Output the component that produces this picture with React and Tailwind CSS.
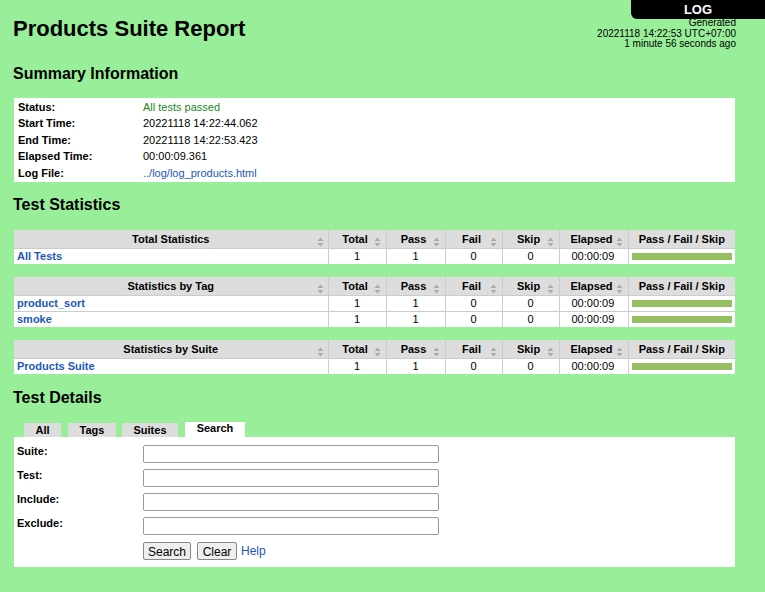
import React from 'react';

const font = { fontFamily: '"Liberation Sans", Arial, sans-serif' };

const SortIcon = () => (
  <svg width="7" height="10" viewBox="0 0 7 10" className="inline-block">
    <path d="M3.5 0.5 L6.5 4 L0.5 4 Z" fill="#aaa" />
    <path d="M3.5 9.5 L6.5 6 L0.5 6 Z" fill="#aaa" />
  </svg>
);

const cols = [
  { label: 'Total', w: 'w-[58px]' },
  { label: 'Pass', w: 'w-[59px]' },
  { label: 'Fail', w: 'w-[57px]' },
  { label: 'Skip', w: 'w-[57px]' },
  { label: 'Elapsed', w: 'w-[69px]' },
];

const StatTable = ({ title, rows }) => (
  <table className="w-[721px] table-fixed border-collapse bg-white text-[11px] leading-[13px]">
    <colgroup>
      <col className="w-[314px]" />
      {cols.map((c) => <col key={c.label} className={c.w} />)}
      <col className="w-[107px]" />
    </colgroup>
    <thead>
      <tr className="h-[18px] bg-[#ddd]">
        <th className="relative border-r border-[#ccc] px-1 text-center font-bold">
          {title}
          <span className="absolute right-[4px] top-[4px]"><SortIcon /></span>
        </th>
        {cols.map((c) => (
          <th key={c.label} className="relative border-r border-[#ccc] pr-[12px] text-right font-bold">
            <span className="inline-block w-full pl-[8px] text-center">{c.label}</span>
            <span className="absolute right-[5px] top-[4px]"><SortIcon /></span>
          </th>
        ))}
        <th className="text-center font-bold">Pass / Fail / Skip</th>
      </tr>
    </thead>
    <tbody>
      {rows.map((r) => (
        <tr key={r} className="h-[16px] border-t border-[#ccc]">
          <td className="border-r border-[#ccc] px-[3px] font-bold text-[#2157b8]">{r}</td>
          <td className="border-r border-[#ccc] text-center">1</td>
          <td className="border-r border-[#ccc] text-center">1</td>
          <td className="border-r border-[#ccc] text-center">0</td>
          <td className="border-r border-[#ccc] text-center">0</td>
          <td className="border-r border-[#ccc] pl-[12px]">00:00:09</td>
          <td className="px-[3px]">
            <div className="h-[7px] w-[100px] bg-[#97bd61]" />
          </td>
        </tr>
      ))}
    </tbody>
  </table>
);

const summary = [
  ['Status:', 'All tests passed', 'text-[#1a881a]'],
  ['Start Time:', '20221118 14:22:44.062', 'text-black'],
  ['End Time:', '20221118 14:22:53.423', 'text-black'],
  ['Elapsed Time:', '00:00:09.361', 'text-black'],
  ['Log File:', '../log/log_products.html', 'text-[#2157b8]'],
];

const fields = ['Suite:', 'Test:', 'Include:', 'Exclude:'];

export default function App() {
  return (
    <div className="relative min-h-[592px] w-[765px] overflow-hidden bg-[#9e9] text-black" style={font}>
      {/* log link badge */}
      <div className="absolute right-0 top-0 z-10 flex h-[19px] w-[134px] items-center justify-center rounded-bl-[6px] bg-black text-[13px] font-bold text-white">
        LOG
      </div>

      {/* header */}
      <div className="flex items-start justify-between pl-[13px] pr-[29px]">
        <h1 className="pt-[16px] text-[22px] font-bold leading-[26px]">Products Suite Report</h1>
        <div className="pt-[18px] text-right text-[10px] leading-[10.5px]">
          <div>Generated</div>
          <div>20221118 14:22:53 UTC+07:00</div>
          <div>1 minute 56 seconds ago</div>
        </div>
      </div>

      {/* summary */}
      <h2 className="mt-[14px] pl-[13px] text-[16px] font-bold leading-[20px]">Summary Information</h2>
      <div className="ml-[14px] mt-[14px] w-[721px] bg-white px-[4px] py-[1px] text-[11px]">
        {summary.map(([k, v, c]) => (
          <div key={k} className="flex h-[16.6px] items-center">
            <div className="w-[125px] font-bold">{k}</div>
            <div className={c}>{v}</div>
          </div>
        ))}
      </div>

      {/* statistics */}
      <h2 className="mt-[13px] pl-[13px] text-[16px] font-bold leading-[20px]">Test Statistics</h2>
      <div className="ml-[14px] mt-[15px] flex flex-col gap-[13px]">
        <StatTable title="Total Statistics" rows={['All Tests']} />
        <StatTable title="Statistics by Tag" rows={['product_sort', 'smoke']} />
        <StatTable title="Statistics by Suite" rows={['Products Suite']} />
      </div>

      {/* details */}
      <h2 className="mt-[14px] pl-[13px] text-[16px] font-bold leading-[20px]">Test Details</h2>
      <div className="ml-[24px] mt-[14px] flex items-end text-[11px] font-bold">
        <div className="flex h-[14px] w-[37px] items-center justify-center bg-[#ddd]">All</div>
        <div className="ml-[7px] flex h-[14px] w-[48px] items-center justify-center bg-[#ddd]">Tags</div>
        <div className="ml-[6px] flex h-[14px] w-[56px] items-center justify-center bg-[#ddd]">Suites</div>
        <div className="ml-[7px] flex h-[15px] w-[60px] items-end justify-center bg-white pb-[1px]">Search</div>
      </div>
      <div className="ml-[14px] w-[721px] bg-white pb-[7px] pl-[3px] pt-[8px] text-[11px]">
        {fields.map((f) => (
          <div key={f} className="mb-[6px] flex h-[18px]">
            <div className="w-[126px] font-bold leading-[12px]">{f}</div>
            <input className="h-[18px] w-[296px] rounded-[2px] border border-[#999] bg-white" />
          </div>
        ))}
        <div className="flex items-center pl-[126px] pt-[1px]">
          <button className="h-[18px] w-[48px] rounded-[2px] border border-[#888] bg-[#efefef] text-[12px]">Search</button>
          <button className="ml-[6px] h-[18px] w-[40px] rounded-[2px] border border-[#888] bg-[#efefef] text-[12px]">Clear</button>
          <span className="ml-[4px] text-[12px] text-[#2157b8]">Help</span>
        </div>
      </div>
    </div>
  );
}
